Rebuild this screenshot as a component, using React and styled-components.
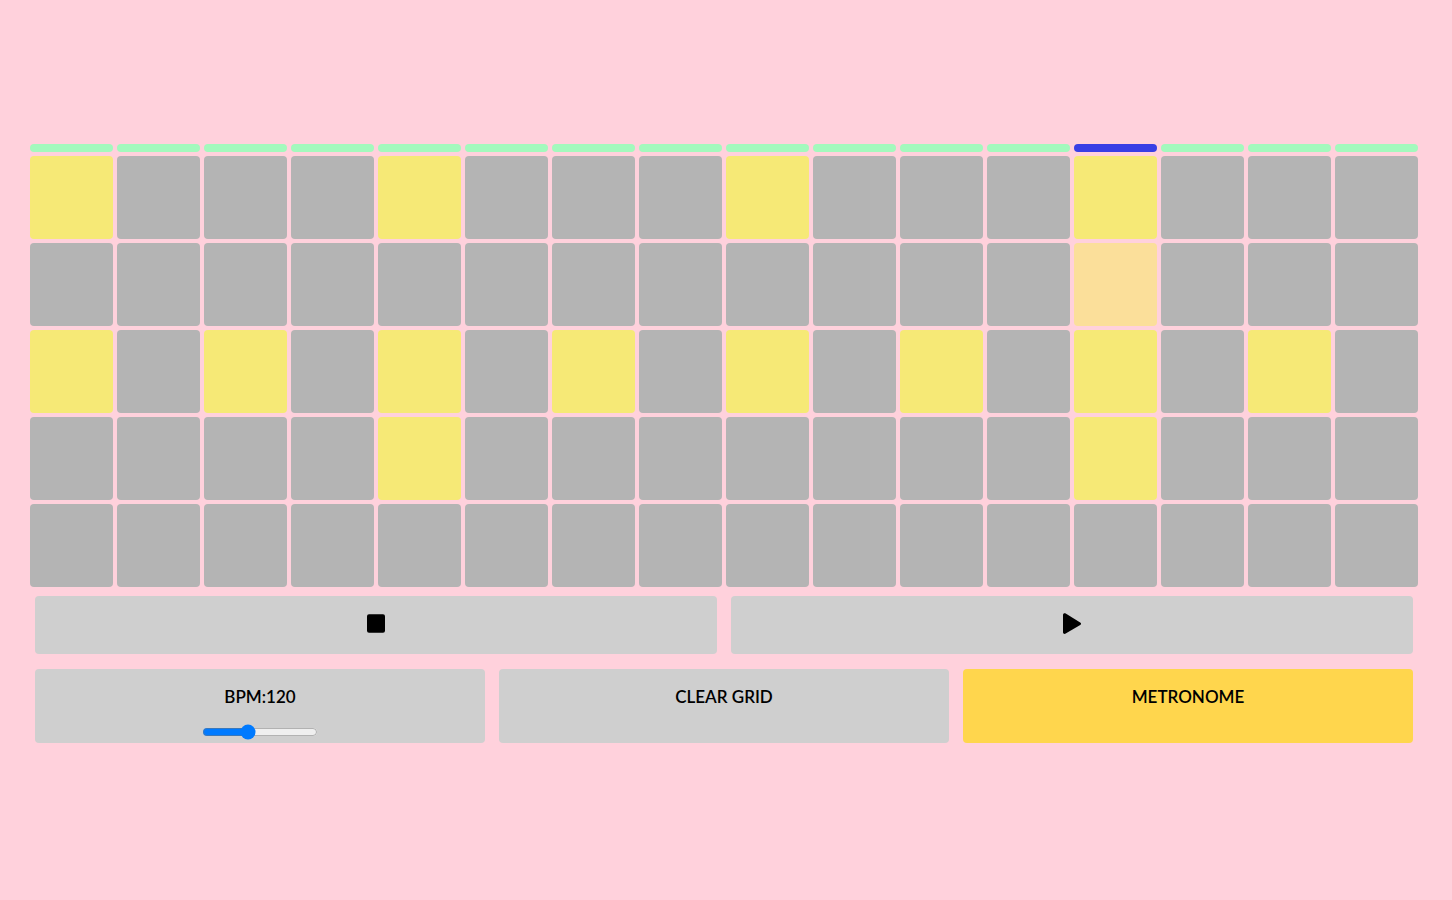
import React, { useState } from "react";
import styled, { createGlobalStyle } from "styled-components";

const GlobalStyle = createGlobalStyle`
  * { box-sizing: border-box; }
  body {
    margin: 0;
    background: #ffd1dc;
    color: #000;
    font-family: Lato, sans-serif;
  }
`;

const Page = styled.main`
  min-height: 100vh;
  display: flex;
  flex-direction: column;
  justify-content: center;
  padding: 0 34px 13px 30px;
`;

const Grid = styled.div`
  display: grid;
  grid-template-columns: repeat(16, 1fr);
  gap: 4px;
`;

const Step = styled.div`
  height: 8px;
  border-radius: 4px;
  background: ${({ $current }) => ($current ? "#393fe5" : "#a3f9bd")};
`;

const padColors = { off: "#b4b4b4", on: "#f6e976", fading: "#fbdf9a" };

const Pad = styled.button`
  aspect-ratio: 1;
  padding: 0;
  border: 0;
  border-radius: 4px;
  cursor: pointer;
  background: ${({ $state }) => padColors[$state]};
`;

const Controls = styled.div`
  display: grid;
  grid-template-columns: repeat(${({ $columns }) => $columns}, 1fr);
  gap: 14px;
  padding: 0 5px;
  margin-top: ${({ $space }) => $space}px;
`;

const TransportButton = styled.button`
  display: flex;
  align-items: center;
  justify-content: center;
  height: 58px;
  padding: 0 0 2px;
  border: 0;
  border-radius: 4px;
  background: #cfcfcf;
  color: #000;
  cursor: pointer;
`;

const Panel = styled.div`
  display: flex;
  flex-direction: column;
  align-items: center;
  height: 74px;
  padding-top: 16px;
  border: 0;
  border-radius: 4px;
  background: ${({ $active }) => ($active ? "#ffd64d" : "#cfcfcf")};
  color: #000;
  font: 600 17px/24px Lato, sans-serif;
`;

const PanelButton = styled(Panel).attrs({ as: "button", type: "button" })`
  cursor: pointer;
`;

const Slider = styled.input`
  width: 116px;
  height: 16px;
  margin: 15px 0 0;
  accent-color: #007aff;
`;

const STEPS = 16;
const CURRENT = 12;
const pattern = [
  { name: "Kick", on: [0, 4, 8, 12] },
  { name: "Snare", on: [], fading: 12 },
  { name: "Hi-hat", on: [0, 2, 4, 6, 8, 10, 12, 14] },
  { name: "Clap", on: [4, 12] },
  { name: "Tom", on: [] },
];

const initialGrid = pattern.map(({ on, fading }) =>
  Array.from({ length: STEPS }, (_, i) =>
    on.includes(i) ? "on" : i === fading ? "fading" : "off"
  )
);

export default function App() {
  const [grid, setGrid] = useState(initialGrid);
  const [bpm, setBpm] = useState(120);
  const [metronome, setMetronome] = useState(true);
  const [playing, setPlaying] = useState(true);

  const toggle = (row, col) =>
    setGrid((g) =>
      g.map((r, i) =>
        i === row ? r.map((s, j) => (j === col ? (s === "off" ? "on" : "off") : s)) : r
      )
    );

  return (
    <>
      <GlobalStyle />
      <Page>
        <Grid>
          {Array.from({ length: STEPS }, (_, i) => (
            <Step key={i} $current={playing && i === CURRENT} />
          ))}
          {grid.map((row, r) =>
            row.map((state, c) => (
              <Pad
                key={`${r}-${c}`}
                type="button"
                $state={state}
                aria-label={`${pattern[r].name}, step ${c + 1}`}
                aria-pressed={state !== "off"}
                onClick={() => toggle(r, c)}
              />
            ))
          )}
        </Grid>
        <Controls $columns={2} $space={9}>
          <TransportButton type="button" aria-label="Stop" onClick={() => setPlaying(false)}>
            <svg width="18" height="20" viewBox="0 0 18 20" aria-hidden="true">
              <rect y="0.3" width="18" height="18.5" rx="2" />
            </svg>
          </TransportButton>
          <TransportButton type="button" aria-label="Play" onClick={() => setPlaying(true)}>
            <svg width="18" height="22" viewBox="0 0 18 22" aria-hidden="true">
              <path d="M0 1.9C0 .5 1.5-.1 2.7.6L17.2 9.4C18.3 10.1 18.3 11.2 17.2 11.9L2.7 20.6C1.5 21.3 0 20.7 0 19.3Z" />
            </svg>
          </TransportButton>
        </Controls>
        <Controls $columns={3} $space={15}>
          <Panel>
            <label htmlFor="bpm">BPM:{bpm}</label>
            <Slider
              id="bpm"
              type="range"
              min="60"
              max="220"
              value={bpm}
              onChange={(e) => setBpm(Number(e.target.value))}
            />
          </Panel>
          <PanelButton onClick={() => setGrid(grid.map((r) => r.map(() => "off")))}>
            CLEAR GRID
          </PanelButton>
          <PanelButton
            $active={metronome}
            aria-pressed={metronome}
            onClick={() => setMetronome(!metronome)}
          >
            METRONOME
          </PanelButton>
        </Controls>
      </Page>
    </>
  );
}
